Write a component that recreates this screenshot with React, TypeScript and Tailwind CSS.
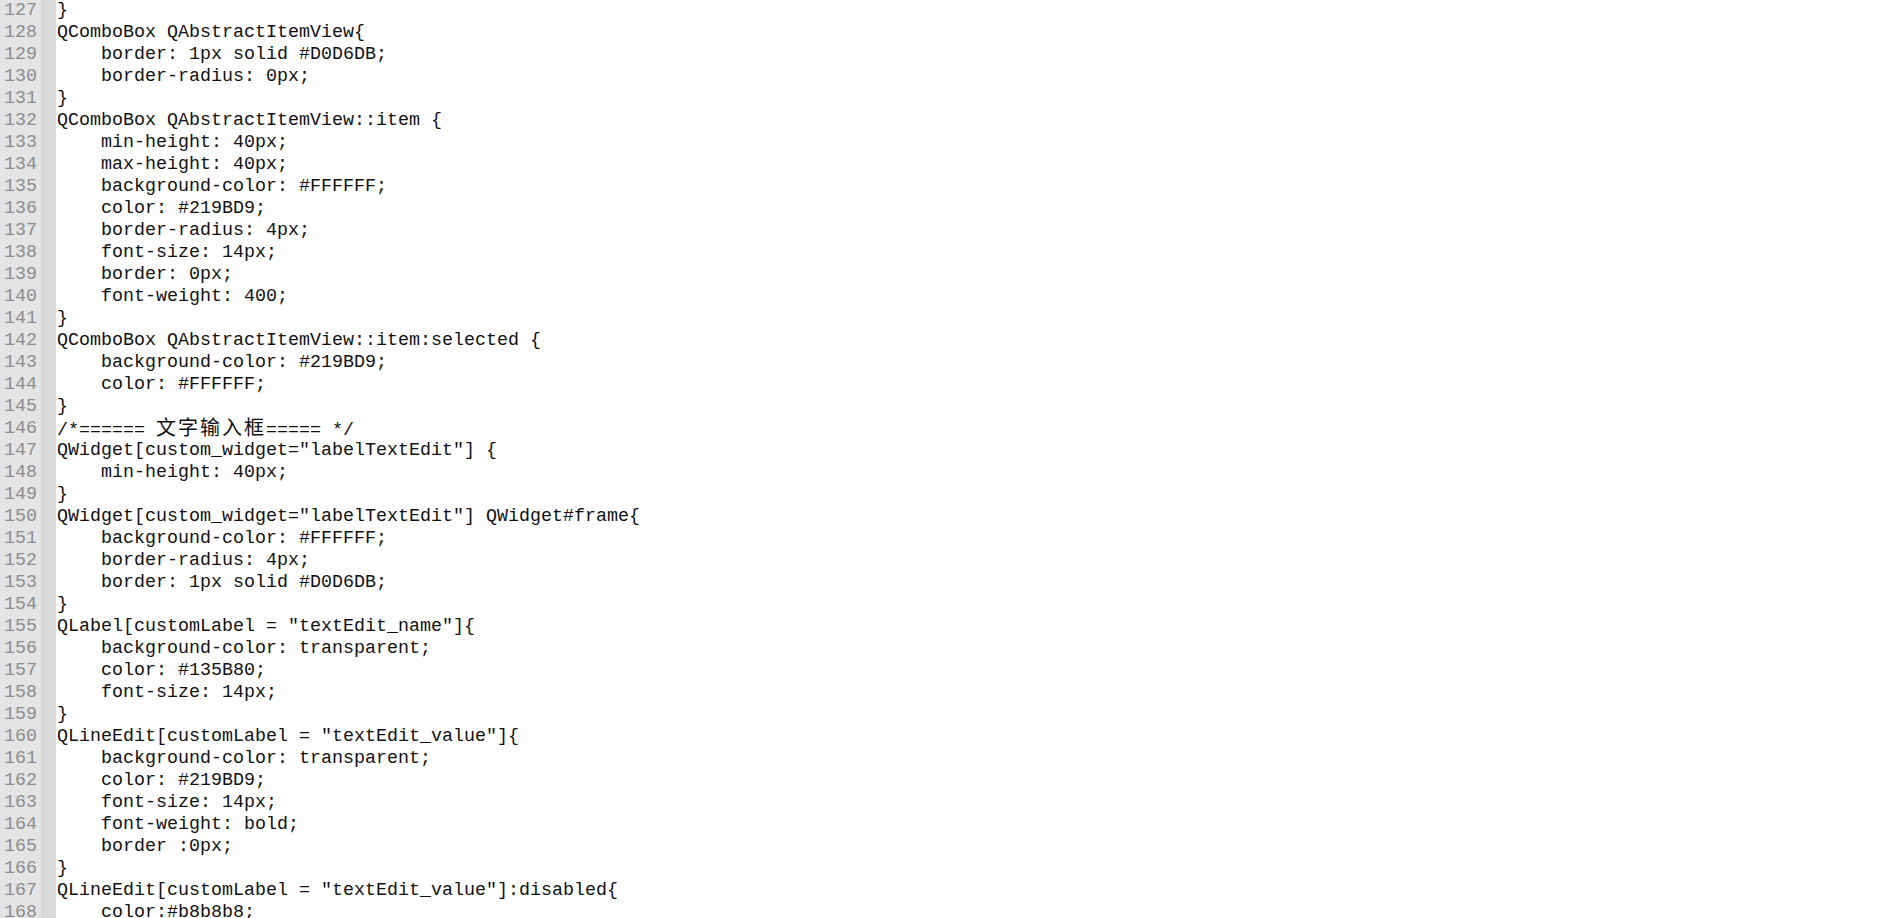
const lines: string[] = [
  "}",
  "QComboBox QAbstractItemView{",
  "    border: 1px solid #D0D6DB;",
  "    border-radius: 0px;",
  "}",
  "QComboBox QAbstractItemView::item {",
  "    min-height: 40px;",
  "    max-height: 40px;",
  "    background-color: #FFFFFF;",
  "    color: #219BD9;",
  "    border-radius: 4px;",
  "    font-size: 14px;",
  "    border: 0px;",
  "    font-weight: 400;",
  "}",
  "QComboBox QAbstractItemView::item:selected {",
  "    background-color: #219BD9;",
  "    color: #FFFFFF;",
  "}",
  "/*====== @@===== */",
  'QWidget[custom_widget="labelTextEdit"] {',
  "    min-height: 40px;",
  "}",
  'QWidget[custom_widget="labelTextEdit"] QWidget#frame{',
  "    background-color: #FFFFFF;",
  "    border-radius: 4px;",
  "    border: 1px solid #D0D6DB;",
  "}",
  'QLabel[customLabel = "textEdit_name"]{',
  "    background-color: transparent;",
  "    color: #135B80;",
  "    font-size: 14px;",
  "}",
  'QLineEdit[customLabel = "textEdit_value"]{',
  "    background-color: transparent;",
  "    color: #219BD9;",
  "    font-size: 14px;",
  "    font-weight: bold;",
  "    border :0px;",
  "}",
  'QLineEdit[customLabel = "textEdit_value"]:disabled{',
  "    color:#b8b8b8;",
];

function Code({ text }: { text: string }) {
  if (!text.includes("@@")) return <>{text}</>;
  const [a, b] = text.split("@@");
  return (
    <>
      {a}
      <span className="font-['Noto_Sans_CJK_SC',sans-serif] text-[20px] tracking-[2px]">文字输入框</span>
      {b}
    </>
  );
}

export default function App() {
  return (
    <div className="h-[918px] w-[1895px] overflow-hidden bg-white font-['Liberation_Mono','Courier_New',monospace] text-[18.33px] text-[#111]">
      {lines.map((l, i) => (
        <div key={i} className="flex h-[22px] items-center leading-[22px]">
          <div className="flex h-full w-[41px] shrink-0 justify-end bg-[#e4e4e4] pr-[4px] text-[#8c8c8c]">
            {127 + i}
          </div>
          <div className="h-full w-[15px] shrink-0 bg-[#dadada]" />
          <div className="whitespace-pre pl-[1px]">
            <Code text={l} />
          </div>
        </div>
      ))}
    </div>
  );
}
